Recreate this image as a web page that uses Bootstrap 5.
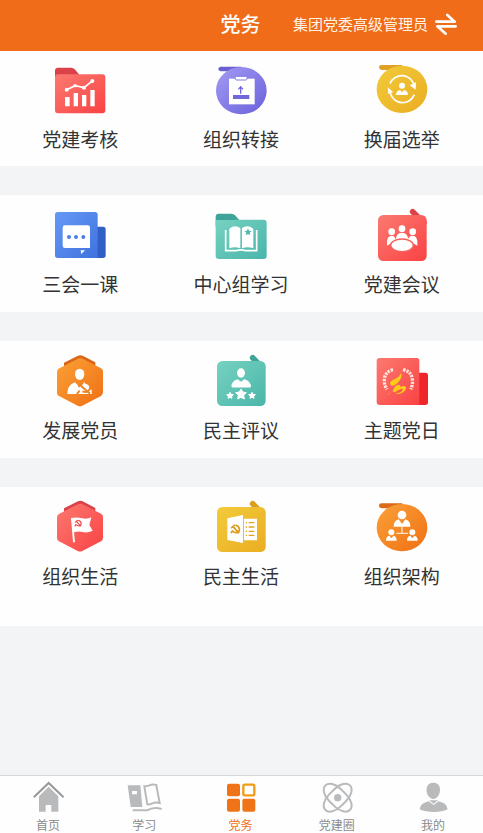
<!DOCTYPE html>
<html lang="zh-CN">
<head>
<meta charset="utf-8">
<meta name="viewport" content="width=device-width, initial-scale=1">
<title>党务</title>
<link href="https://cdn.jsdelivr.net/npm/bootstrap@5.3.0/dist/css/bootstrap.min.css" rel="stylesheet">
<style>
body{font-family:"Noto Sans CJK SC","Noto Sans",sans-serif;background:#f3f4f6;color:#333}
.topbar{background:#f06c18;height:51px;padding:0 2px 3px 0}
.topbar h1{font-size:20px;line-height:28px;font-weight:500}
.side{flex:1 1 0}
.role{font-size:15px;line-height:24px;color:#fff3e6;margin-right:24px;gap:7px}
.role svg{width:22px;height:22px}
.panels{gap:29px}
.panel{padding:12px 1px 14px 0;background:#fefefe}
.panel:first-child{padding-top:11px;padding-bottom:13px}
.panel:last-child{padding-bottom:36px}
.tile{color:#333;font-size:19px;line-height:28px;gap:3px}
.tile svg{width:60px;height:60px}
.tabs{background:#fefefe;border-top:1px solid #d6d7da;padding:4px 2px 0 0}
.tab{color:#8a8a8a;font-size:12px;line-height:17px}
.tab svg{width:36px;height:36px}
.tab.active{color:#ee6f16}
</style>
</head>
<body>
<svg width="0" height="0" class="position-absolute" aria-hidden="true">
<defs>
<linearGradient id="red" x2="1" y2="1"><stop stop-color="#fb7a70"/><stop offset="1" stop-color="#fa4244"/></linearGradient>
<linearGradient id="violet" x2="1" y2="1"><stop stop-color="#a39bf3"/><stop offset="1" stop-color="#6a60dc"/></linearGradient>
<linearGradient id="gold" x2="1" y2="1"><stop stop-color="#f1cb3b"/><stop offset="1" stop-color="#ebad22"/></linearGradient>
<linearGradient id="blue" x2="1" y2="1"><stop stop-color="#6699f5"/><stop offset="1" stop-color="#4072df"/></linearGradient>
<linearGradient id="teal" x2="1" y2="1"><stop stop-color="#76d2c0"/><stop offset="1" stop-color="#4ab5aa"/></linearGradient>
<linearGradient id="orange" x2="1" y2="1"><stop stop-color="#fba137"/><stop offset="1" stop-color="#ef7014"/></linearGradient>
<g id="emblem" fill="none" stroke-linecap="round" stroke-linejoin="round"><path d="M4 10 12 3M8 7l17 18M17 3c14 5 13 21 1 22-5 0-9-2-12-5M6 20l-3 5"/></g>
</defs>
</svg>
<div class="d-flex flex-column min-vh-100">
<header class="topbar d-flex align-items-center text-white">
<div class="side"></div>
<h1 class="m-0">党务</h1>
<div class="side d-flex justify-content-end">
<button type="button" class="role btn p-0 border-0 d-flex align-items-center text-nowrap"><span>集团党委高级管理员</span>
<svg viewBox="764 38 66 66" fill="none" stroke="#fff" stroke-width="8" stroke-linecap="round" stroke-linejoin="round" aria-hidden="true"><path d="M768 64h55l-22-20M826 78h-55l25 22"/></svg></button>
</div>
</header>
<main class="panels d-flex flex-column">
<section class="panel"><div class="row g-0">
<a href="#" class="tile col-4 d-flex flex-column align-items-center text-decoration-none">
<svg viewBox="61 21 180 180" aria-hidden="true"><path d="M76 80V47q0-9 9-9h40q6 0 10 5l13 15v22z" fill="#dc4048"/><rect x="76" y="58" width="151" height="117" rx="9" fill="url(#red)"/><path d="M106 126h14v28h-14zM132 114h13v40h-13zM157 120h13v34h-13zM182 105h13v49h-13z" fill="#fff"/><path d="m111 104 25-12 27 6 26-21" fill="none" stroke="#fff" stroke-width="5"/><g fill="#fff"><circle cx="111" cy="104" r="6"/><circle cx="136" cy="92" r="5"/><circle cx="163" cy="98" r="6"/><circle cx="188" cy="78" r="6"/></g></svg><span>党建考核</span></a>
<a href="#" class="tile col-4 d-flex flex-column align-items-center text-decoration-none">
<svg viewBox="63 21 180 180" aria-hidden="true"><path d="M92 35h62v14H92q-7-1-7-7t7-7" fill="#6a5ed0"/><ellipse cx="154" cy="107" rx="76" ry="71" fill="url(#violet)"/><path d="M117 71h77v77h-77z" fill="#fff"/><rect x="136" y="64" width="35" height="11" rx="4" fill="#fff" stroke="#8178e5" stroke-width="3"/><path d="M129 120h49v12h-49z" fill="#7167da"/><path d="M152 116V98m-7 5 7-8 7 8" fill="none" stroke="#7167da" stroke-width="4"/></svg><span>组织转接</span></a>
<a href="#" class="tile col-4 d-flex flex-column align-items-center text-decoration-none">
<svg viewBox="65 21 180 180" aria-hidden="true"><path d="M94 30h62v15H94q-8-1-8-8t8-7" fill="#dfa024"/><ellipse cx="155" cy="103" rx="76" ry="71" fill="url(#gold)"/><g fill="none" stroke="#fff" stroke-width="5"><path d="M119 86a38 38 0 0 1 73 8M192 119a38 38 0 0 1-72-4"/></g><path d="m178 91 18 13 1-22zM114 117l-2-20 16 14z" fill="#fff"/><circle cx="155" cy="92" r="9" fill="#fff"/><path d="M137 120q0-12 12-15l6 7 6-7q12 3 12 15z" fill="#fff"/></svg><span>换届选举</span></a>
</div></section>
<section class="panel"><div class="row g-0">
<a href="#" class="tile col-4 d-flex flex-column align-items-center text-decoration-none">
<svg viewBox="61 21 180 180" aria-hidden="true"><path d="M190 80h30q8 0 8 8v78q0 8-8 8h-30z" fill="#315fc4"/><path d="M84 36h112q8 0 8 8v130H84q-8 0-8-8V44q0-8 8-8" fill="url(#blue)"/><path d="M106 76h68q7 0 7 7v61h-75q-7 0-7-7V83q0-7 7-7M153 151h13l-11 11z" fill="#fff"/><g fill="#4c7fe3"><circle cx="118" cy="111" r="6"/><circle cx="139" cy="111" r="6"/><circle cx="161" cy="111" r="6"/></g></svg><span>三会一课</span></a>
<a href="#" class="tile col-4 d-flex flex-column align-items-center text-decoration-none">
<svg viewBox="543 21 180 180" aria-hidden="true"><path d="M557 80V50q0-9 9-9h38q7 0 11 5l13 14v20z" fill="#3fa398"/><path d="M557 60q48 0 60-1h84q9 0 9 9v100q0 9-9 9H566q-9 0-9-9z" fill="url(#teal)"/><path d="M587 90v62h31q15-5 30 0h32V90" fill="none" stroke="#fff" stroke-width="5"/><path d="M598 86q16-13 33-2v61q-17-7-33 0zM636 84q17-11 34 2v59q-17-7-34 0z" fill="#fff"/><path d="m654 85 3 7 8 1-6 5 2 8-7-4-7 4 2-8-6-5 8-1z" fill="#50b8ad"/></svg><span>中心组学习</span></a>
<a href="#" class="tile col-4 d-flex flex-column align-items-center text-decoration-none">
<svg viewBox="65 21 180 180" aria-hidden="true"><path d="m187 35 34 33" stroke="#dc4348" stroke-width="17" stroke-linecap="round"/><rect x="83" y="45" width="146" height="138" rx="16" fill="url(#red)"/><g fill="#fff"><circle cx="155" cy="86" r="10"/><circle cx="124" cy="95" r="10"/><circle cx="187" cy="95" r="10"/><path d="M110 137v-14q1-15 14-16 10 0 13 14zM137 119q0-21 18-21t18 21zM172 121q3-14 14-14 13 0 15 16v14z"/><ellipse cx="155" cy="136" rx="34" ry="19" stroke="#fa6059" stroke-width="4"/></g></svg><span>党建会议</span></a>
</div></section>
<section class="panel"><div class="row g-0">
<a href="#" class="tile col-4 d-flex flex-column align-items-center text-decoration-none">
<svg viewBox="61 24 180 180" aria-hidden="true"><path d="M103 70V53l42-21q7-3 14 0l38 20v18z" fill="#db6516"/><path d="m145 41-56 29q-7 4-7 11v62q0 7 6 10l56 29q7 3 14 0l56-29q6-4 6-11V80q0-7-6-10l-55-29q-7-4-14 0" fill="url(#orange)"/><ellipse cx="150" cy="88" rx="14" ry="17" fill="#fff"/><path d="M113 147q-1-26 23-35l13 14 14-14q24 9 24 35z" fill="#fff"/><path d="m146 125 14-11M152 121l29 25M166 112q24 8 12 24-6 8-20 3M150 137l-8 10" fill="none" stroke="#f08322" stroke-width="6"/></svg><span>发展党员</span></a>
<a href="#" class="tile col-4 d-flex flex-column align-items-center text-decoration-none">
<svg viewBox="543 24 180 180" aria-hidden="true"><path d="m668 38 29 30" stroke="#3fa398" stroke-width="17" stroke-linecap="round"/><rect x="561" y="48" width="146" height="135" rx="16" fill="url(#teal)"/><g fill="#fff"><ellipse cx="633" cy="84" rx="12" ry="14"/><path d="M606 126v-7q3-12 17-15l10 8 10-8q14 3 18 15v7zM633 132l5 9 11 2-8 8 2 11-10-5-10 5 2-11-8-8 11-2zM600 142l3 6 7 1-5 5 1 6-6-3-6 3 1-6-5-5 7-1zM666 142l3 6 7 1-5 5 1 6-6-3-6 3 1-6-5-5 7-1z" stroke="#fff" stroke-width="3" stroke-linejoin="round"/></g></svg><span>民主评议</span></a>
<a href="#" class="tile col-4 d-flex flex-column align-items-center text-decoration-none">
<svg viewBox="65 24 180 180" aria-hidden="true"><path d="M190 83h35q8 0 8 8v81q0 8-8 8h-35z" fill="#ee2629"/><path d="M88 39h111q8 0 8 8v133H88q-9 0-9-9V47q0-8 9-8" fill="url(#red)"/><path d="M128 74q-25 7-26 30-1 16 8 29M158 74q26 5 28 29 2 16-5 30" fill="none" stroke="#ffe5d8" stroke-width="10" stroke-dasharray="7 3"/><path d="M106 148c16-1 20-12 26-20 8-12 20-11 18-1 12-9 21-1 16 7-7 10-22 16-30 12 11-1 23-8 21-13-5-3-14 3-21 7-8 4-11-1-5-9-9 7-11 19-25 17" fill="#ffca18"/><path d="M119 116c0-13 25-12 33-31 5 7-2 24-15 33-6 5-14 7-18-2" fill="#ffca18"/></svg><span>主题党日</span></a>
</div></section>
<section class="panel"><div class="row g-0">
<a href="#" class="tile col-4 d-flex flex-column align-items-center text-decoration-none">
<svg viewBox="61 27 180 180" aria-hidden="true"><path d="M103 73V55l42-21q7-3 14 0l38 20v19z" fill="#db434a"/><path d="m145 43-56 28q-7 4-7 11v62q0 7 6 10l56 29q7 3 14 0l56-29q6-4 6-11V81q0-7-6-10l-55-28q-7-4-14 0" fill="url(#red)"/><path d="M124 84q17-4 34 1 14 3 27-3l-6 23 10 17q-15 8-30 4-13-3-26 1l3 30h-6z" fill="#fff"/><use href="#emblem" transform="translate(134 89) scale(.75)" stroke="#f34f50" stroke-width="5"/></svg><span>组织生活</span></a>
<a href="#" class="tile col-4 d-flex flex-column align-items-center text-decoration-none">
<svg viewBox="543 27 180 180" aria-hidden="true"><path d="m668 41 29 30" stroke="#d99f20" stroke-width="17" stroke-linecap="round"/><rect x="561" y="51" width="146" height="135" rx="16" fill="url(#gold)"/><path d="m592 85 47-10v84l-47-9zM642 86h39v65h-39z" fill="#fff"/><use href="#emblem" transform="translate(601 103)" stroke="#df9c18" stroke-width="5"/><g fill="none" stroke="#e1a51c" stroke-width="4"><path d="M647 98h4m5 0h17M647 111h4m5 0h17M647 124h4m5 0h17M647 136h4m5 0h17"/></g></svg><span>民主生活</span></a>
<a href="#" class="tile col-4 d-flex flex-column align-items-center text-decoration-none">
<svg viewBox="65 27 180 180" aria-hidden="true"><path d="M94 40h62v15H94q-8-1-8-8t8-7" fill="#dc6a18"/><ellipse cx="155" cy="113" rx="76" ry="71" fill="url(#orange)"/><g fill="#fff"><ellipse cx="155" cy="75" rx="13" ry="13"/><path d="M130 110q0-18 15-22l10 14 10-14q15 4 15 22z"/><circle cx="123" cy="127" r="9"/><circle cx="186" cy="127" r="9"/><path d="M107 152q0-13 10-15l6 8 6-8q10 2 10 15zM170 152q0-13 10-15l6 8 6-8q10 2 10 15z"/></g><path d="M155 110v19M138 130h35" stroke="#ffe3c7" stroke-width="4"/></svg><span>组织架构</span></a>
</div></section>
</main>
<nav class="tabs d-flex mt-auto" aria-label="主导航">
<a href="#" class="tab col d-flex flex-column align-items-center text-decoration-none"><svg viewBox="90 45 108 108" aria-hidden="true"><path d="m103 95 43-41 43 41" fill="none" stroke="#999" stroke-width="6" stroke-linecap="round"/><path d="m146 65 29 29v46h-21v-20h-17v20h-20V94z" fill="#b9babc"/></svg><span>首页</span></a>
<a href="#" class="tab col d-flex flex-column align-items-center text-decoration-none"><svg viewBox="378 45 108 108" aria-hidden="true"><path fill-rule="evenodd" d="M383 61h38l6 65h-35zm13 17v10h15V78z" fill="#b9babc"/><path d="M433 64q9 0 15-3 10-4 21-1l10 54q-13-3-22 1-8 4-15 3z" fill="none" stroke="#b9babc" stroke-width="6"/><path d="M398 136h43q20-12 44-4" fill="none" stroke="#b9babc" stroke-width="6"/></svg><span>学习</span></a>
<a href="#" class="tab active col d-flex flex-column align-items-center text-decoration-none" aria-current="page"><svg viewBox="6 45 108 108" aria-hidden="true"><g fill="#ef7418"><rect x="18" y="56" width="39" height="38" rx="6"/><rect x="18" y="101" width="39" height="39" rx="6"/><rect x="64" y="101" width="39" height="39" rx="6"/></g><rect x="67" y="59" width="33" height="32" rx="4" fill="#fff" stroke="#f39a16" stroke-width="7"/></svg><span>党务</span></a>
<a href="#" class="tab col d-flex flex-column align-items-center text-decoration-none"><svg viewBox="297 45 108 108" fill="none" stroke="#b9babc" stroke-width="6" aria-hidden="true"><rect x="301" y="73" width="104" height="50" rx="40" ry="25" transform="rotate(45 353 98)"/><rect x="301" y="73" width="104" height="50" rx="40" ry="25" transform="rotate(-45 353 98)"/><circle cx="353" cy="98" r="11" fill="#b9babc" stroke="none"/></svg><span>党建圈</span></a>
<a href="#" class="tab col d-flex flex-column align-items-center text-decoration-none"><svg viewBox="585 45 108 108" fill="#b9babc" aria-hidden="true"><path d="M640 53c25 0 24 31 12 43q-12 12-24 0c-12-12-13-43 12-43M599 133q2-19 27-24l15 11 15-11q25 5 27 24-17 8-42 8t-42-8M628 106h26l-13 10z"/></svg><span>我的</span></a>
</nav>
</div>
<script src="https://cdn.jsdelivr.net/npm/bootstrap@5.3.0/dist/js/bootstrap.bundle.min.js"></script>
</body>
</html>
